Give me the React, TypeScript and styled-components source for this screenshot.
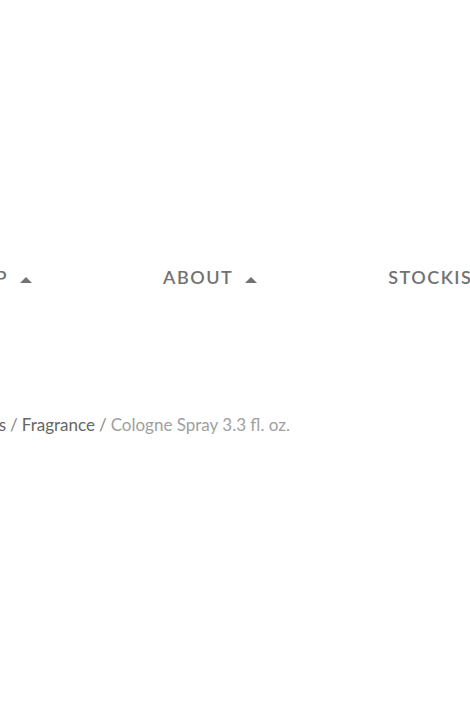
import styled, { createGlobalStyle } from "styled-components";

const GlobalStyle = createGlobalStyle`
    html, body {
        margin: 0;
        padding: 0;
        background: #ffffff;
        overflow: hidden;
    }
    body {
        font-family: "Lato", "Noto Sans", sans-serif;
    }
`

const Page = styled.div`
    width: 470px;
    height: 706px;
    overflow: hidden;
`

const Nav = styled.nav`
    padding-top: 264px;
`

const NavList = styled.ul`
    display: flex;
    gap: 131px;
    margin: 0 0 0 -47px;
    padding: 0;
    list-style: none;
    white-space: nowrap;
`

const NavItem = styled.li`
    display: flex;
    align-items: center;
    gap: 12px;
    font-size: 18px;
    font-weight: 600;
    letter-spacing: 1.5px;
    color: #727272;
    line-height: 26px;
`

const Caret = styled.span`
    width: 0;
    height: 0;
    margin-top: 6px;
    border-left: 6px solid transparent;
    border-right: 6px solid transparent;
    border-bottom: 6px solid #727272;
`

const Breadcrumb = styled.div`
    margin: 123px 0 0 -60px;
    font-size: 17px;
    line-height: 24px;
    white-space: nowrap;
    color: #6a6a6a;
`

const Crumb = styled.a<{ $current?: boolean }>`
    color: ${(props) => props.$current ? "#a0a0a0" : "#666666"};
    text-decoration: none;
`

const Sep = styled.span`
    color: #888888;
    margin: 0 4px;
`

const App = () => {
    const items = ["SHOP", "ABOUT", "STOCKISTS"]
    return (
        <Page>
            <GlobalStyle />
            <Nav>
                <NavList>
                    {items.map((item) => (
                        <NavItem key={item}>
                            {item}
                            <Caret />
                        </NavItem>
                    ))}
                </NavList>
            </Nav>
            <Breadcrumb>
                <Crumb href="#">Products</Crumb>
                <Sep>/</Sep>
                <Crumb href="#">Fragrance</Crumb>
                <Sep>/</Sep>
                <Crumb $current>Cologne Spray 3.3 fl. oz.</Crumb>
            </Breadcrumb>
        </Page>
    );
}

export default App
